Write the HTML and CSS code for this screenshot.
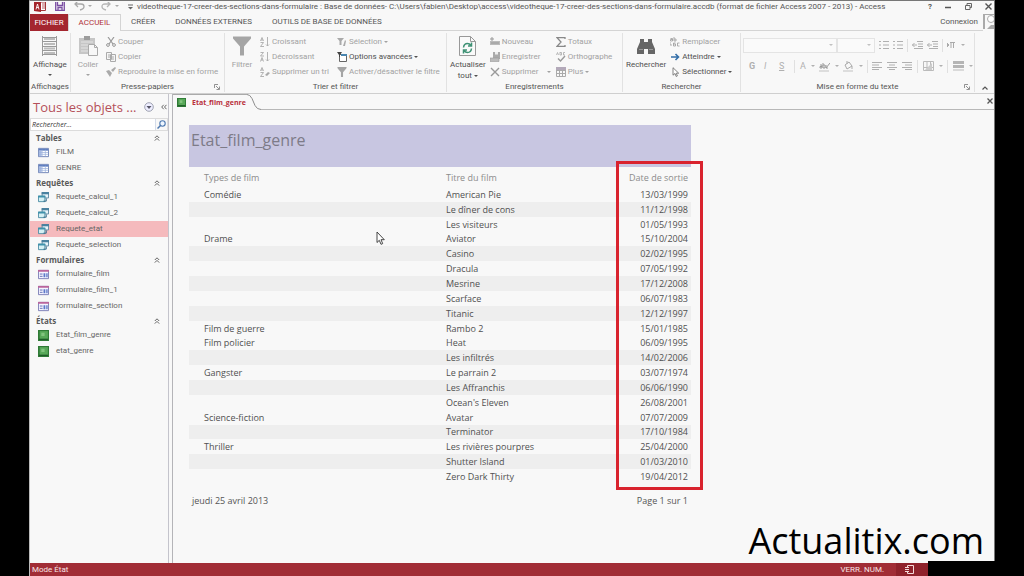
FILE: index.html
```html
<!DOCTYPE html>
<html lang="fr">
<head>
<meta charset="utf-8">
<title>Access - videotheque</title>
<link rel="stylesheet" href="styles.css">
</head>
<body>
<svg class="sprite" aria-hidden="true">
  <symbol id="caret" viewBox="0 0 4 4"><path d="M0 1h4L2 3z" fill="currentColor"/></symbol>
  <symbol id="table" viewBox="0 0 12 10"><path d="M.5.5h11v9H.5z" fill="#fff" stroke="#6a7fb4"/><path d="M1 1h10v2H1z" fill="#5f7fc0"/><path d="M1 3h3v6H1z" fill="#a9bce4"/><path d="M1 5h10M1 7h10M4.500 2v7M8 2v7" stroke="#9db2dc" stroke-width=".8"/></symbol>
  <symbol id="query" viewBox="0 0 12 12"><path d="M4.500.5h7v6h-7z" fill="#e8f4fa" stroke="#5b87a0"/><path d="M4 0h8v2.500H4z" fill="#4a819f"/><path d="M.5 4.500h7v6h-7z" fill="#d5f0f4" stroke="#4b8ca4"/><path d="M0 4h8v2H0z" fill="#3f91ab"/><path d="M6 10h3V7" fill="none" stroke="#2c6687"/></symbol>
  <symbol id="form" viewBox="0 0 12 10"><path d="M.5.5h11v9H.5z" fill="#f5f4ff" stroke="#7779b4"/><path d="M0 0h12v2H0z" fill="#b9659c"/><path d="M2 4.500h3M2 7h3" stroke="#5c68b0"/><path d="M6 3.500h2v4.500H6zM9 3.500h1.500v4.500H9z" fill="#5e79c9"/></symbol>
  <symbol id="report" viewBox="0 0 10 10"><path d="M0 0h10v10H0z" fill="#2f7a36"/><path d="M1.500 1h7.500v7H1.500z" fill="#58a859"/><path d="M3 2.500h3v3H3z" fill="#82c47e"/><path d="M1 8.500h8" stroke="#1e5a27"/></symbol>
  <symbol id="up" viewBox="0 0 6 6"><path d="M.8 3L3 .8 5.200 3M.8 5.600L3 3.400l2.200 2.200" fill="none" stroke="#555" stroke-width=".9"/></symbol>
  <symbol id="funnel" viewBox="0 0 18 19"><path d="M0 0h18v2l-7 8v9H7v-9L0 2z" fill="#a5a5a5"/></symbol>
  <symbol id="bullets" viewBox="0 0 10 10"><path d="M0 1.500h2M0 5h2M0 8.500h2M4 1.500h6M4 5h6M4 8.500h6" stroke="currentColor"/></symbol>
  <symbol id="indent" viewBox="0 0 11 8"><path d="M5 .5h6M6 3h5M6 5.500h5M2 7.500h9M0 4h5M2.500 2L.5 4l2 2" fill="none" stroke="currentColor"/></symbol>
  <symbol id="left" viewBox="0 0 10 8"><path d="M0 .5h10M0 3h7M0 5.500h10M0 7.500h7" stroke="currentColor"/></symbol>
  <symbol id="center" viewBox="0 0 10 8"><path d="M0 .5h10M2 3h6M0 5.500h10M2 7.500h6" stroke="currentColor"/></symbol>
  <symbol id="right" viewBox="0 0 10 8"><path d="M0 .5h10M3 3h7M0 5.500h10M3 7.500h7" stroke="currentColor"/></symbol>
  <symbol id="launcher" viewBox="0 0 6 6"><path d="M.5 4V.5H4M2 2l3 3M5.500 2.500v3h-3" fill="none" stroke="#777" stroke-width=".8"/></symbol>
</svg>

<div class="app">
  <header class="titlebar">
    <div class="quick">
      <svg width="12" height="10" viewBox="0 0 12 10"><path d="M6 0h5.500v8.500H6z" fill="#fff" stroke="#a4373a"/><path d="M8 2h3M8 4h3M8 6h3" stroke="#a4373a" stroke-width=".8"/><path d="M0 0l7-1v11L0 9z" fill="#a4262c"/><path d="M2 7.500L3.500 2 5 7.500M2.500 5.500h2" fill="none" stroke="#fff" stroke-width=".9"/></svg>
      <svg width="10" height="9" viewBox="0 0 10 9"><path d="M.7 0v8.300h8.600V0M2.500 0v3.500h5V0M3 8V5.500h4V8" fill="none" stroke="#7b4fa3" stroke-width="1.300"/></svg>
      <svg width="18" height="9" viewBox="0 0 18 9"><path d="M1 2h6q3 0 3 2.500T6 8M4-1L1 2l3 3" fill="none" stroke="#a9a9a9" stroke-width="1.300"/><path d="M14 3h4l-2 2z" fill="#aaa"/></svg>
      <svg width="18" height="9" viewBox="0 0 18 9"><path d="M9 2H4Q1 2 1 4.500T5 8M6-1l3 3-3 3" fill="none" stroke="#b5b5b5" stroke-width="1.300"/><path d="M14 3h4l-2 2z" fill="#aaa"/></svg>
      <svg width="5" height="6" viewBox="0 0 5 6"><path d="M0 1h5" stroke="#666"/><path d="M0 3h5L2.500 5.500z" fill="#666"/></svg>
    </div>
    <h1>videotheque-17-creer-des-sections-dans-formulaire : Base de données- C:\Users\fabien\Desktop\access\videotheque-17-creer-des-sections-dans-formulaire.accdb (format de fichier Access 2007 - 2013) - Access</h1>
    <div class="window">
      <button type="button" aria-label="Aide">?</button>
      <button type="button" aria-label="Réduire"><svg width="7" height="7" viewBox="0 0 7 7"><path d="M0 4.500h6" stroke="#555" stroke-width="1.500"/></svg></button>
      <button type="button" aria-label="Restaurer"><svg width="7" height="7" viewBox="0 0 7 7"><path d="M.5 2.500h4.500v4H.5zM2 2.500V.5h4.500v4H5" fill="none" stroke="#666"/></svg></button>
      <button type="button" aria-label="Fermer"><svg width="7" height="7" viewBox="0 0 7 7"><path d="M.5.5l6 6M6.500.5l-6 6" stroke="#555" stroke-width="1.400"/></svg></button>
    </div>
  </header>

  <nav class="tabs">
    <button class="file" type="button">FICHIER</button>
    <button class="tab active" type="button">ACCUEIL</button>
    <button class="tab" type="button">CRÉER</button>
    <button class="tab" type="button">DONNÉES EXTERNES</button>
    <button class="tab" type="button">OUTILS DE BASE DE DONNÉES</button>
    <a class="login" href="#">Connexion</a>
    <svg width="11" height="15" viewBox="0 0 11 15"><path d="M0 0h11v15H0z" fill="#aaa"/><path d="M2 1h9v10H8l-4 4H2z" fill="#f8f8f8"/><circle cx="8" cy="5" r="3.500" fill="#fff" stroke="#aaa"/></svg>
  </nav>

  <section class="ribbon">
    <div class="group">
      <div class="tools">
        <button class="big on" type="button"><svg width="17" height="20" viewBox="0 0 17 20"><path d="M1.500 0v20M15.500 0v20M1 1.500h15M1 5.500h15M1 10.500h15M1 14.500h15M1 18.500h15" stroke="#9a9a9a"/><path d="M3 2h11v2H3zM3 7h11v2H3zM3 11.500h11v2H3zM3 16h11v2H3z" fill="#bcbcbc"/></svg><span>Affichage</span><svg class="caret"><use href="#caret"/></svg></button>
      </div>
      <h2>Affichages</h2>
    </div>
    <div class="group">
      <div class="tools">
        <button class="big" type="button"><svg width="19" height="20" viewBox="0 0 19 20"><path d="M0 2h16v16H0z" fill="#c6c6c6"/><path d="M5 0h6v4H5z" fill="#9d9d9d"/><path d="M2 6h12M2 9h9M2 12h7M2 15h7" stroke="#e4e4e4"/><path d="M9.500 8.500h6l3 3v8h-9z" fill="#f7f7f7" stroke="#aaa"/><path d="M15.500 8.500v3h3" fill="none" stroke="#aaa"/></svg><span>Coller</span><svg class="caret"><use href="#caret"/></svg></button>
        <div class="list">
          <button type="button"><svg viewBox="0 0 10 10"><path d="M2 0l5 7M8 0L3 7" stroke="#999" stroke-width="1.200"/><circle cx="2" cy="8" r="1.400" fill="none" stroke="#999"/><circle cx="8" cy="8" r="1.400" fill="none" stroke="#999"/></svg>Couper</button>
          <button type="button"><svg viewBox="0 0 10 10"><path d="M.5.5h5v7h-5zM4.500 2.500h5v7h-5z" fill="#f5f5f5" stroke="#aaa"/><path d="M6 5h2M6 7h2M2 3h2M2 5h2" stroke="#aaa"/></svg>Copier</button>
          <button type="button"><svg viewBox="0 0 10 10"><path d="M0 4l3-1 3 3-2 4zM5 3l2 2 3-4-1-1z" fill="#aaa"/></svg>Reproduire la mise en forme</button>
        </div>
      </div>
      <h2>Presse-papiers<svg class="launcher"><use href="#launcher"/></svg></h2>
    </div>
    <div class="group">
      <div class="tools">
        <button class="big" type="button"><svg width="18" height="20"><use href="#funnel"/></svg><span>Filtrer</span></button>
        <div class="list sort">
          <button type="button"><svg viewBox="0 0 10 10"><path d="M.5 4L2 .5 3.500 4M1 3h2M.5 5.500h3l-3 4h3.500M7.500 0v9M6 7.500L7.500 9 9 7.500" fill="none" stroke="#aaa" stroke-width=".9"/></svg>Croissant</button>
          <button type="button"><svg viewBox="0 0 10 10"><path d="M.5.5h3l-3 3.500H4M.5 9.500L2 5.500l1.500 4M1 8h2M7.500 0v9M6 7.500L7.500 9 9 7.500" fill="none" stroke="#aaa" stroke-width=".9"/></svg>Décroissant</button>
          <button type="button"><svg viewBox="0 0 10 10"><path d="M.5 4L2 .5 3.500 4M1 3h2M.5 5.500h3l-3 4h3.500" fill="none" stroke="#aaa" stroke-width=".9"/><path d="M5 8l3-3 2 1-3 3z" fill="#aaa"/></svg>Supprimer un tri</button>
        </div>
        <div class="list">
          <button type="button"><svg viewBox="0 0 10 10"><path d="M0 1h7L4.500 4v4h-2V4zM8 3L6 9h2l1-5z" fill="#aaa"/></svg>Sélection<svg class="caret"><use href="#caret"/></svg></button>
          <button class="on" type="button"><svg viewBox="0 0 10 10"><path d="M2.500 2.500h7v7h-7z" fill="#fff" stroke="#666"/><path d="M4 2h6v2H4z" fill="#4a86b0"/><path d="M0 0h5L3 3v2H2V3z" fill="#444"/></svg>Options avancées<svg class="caret"><use href="#caret"/></svg></button>
          <button type="button"><svg viewBox="0 0 18 19"><use href="#funnel"/></svg>Activer/désactiver le filtre</button>
        </div>
      </div>
      <h2>Trier et filtrer</h2>
    </div>
    <div class="group">
      <div class="tools">
        <button class="big on" type="button"><svg width="17" height="20" viewBox="0 0 17 20"><path d="M.5.5h11l5 5v14H.5z" fill="#fafafa" stroke="#999"/><path d="M11.500.5v5h5" fill="none" stroke="#999"/><path d="M4.500 11.500q.5-4 4-4 2 0 3.500 2M12.500 6.500v3.500H9M12.500 12.500q-.5 4-4 4-2 0-3.500-2M4.500 17.500V14H8" fill="none" stroke="#3f9275" stroke-width="1.500"/></svg><span>Actualiser<br>tout<svg class="caret"><use href="#caret"/></svg></span></button>
        <div class="list records">
          <button type="button"><svg viewBox="0 0 10 10"><path d="M0 4h10v4H0z" fill="#bbb"/><path d="M1 6h8M2 0v4M0 2h4" stroke="#999"/></svg>Nouveau</button>
          <button type="button"><svg viewBox="0 0 10 10"><path d="M3 0h7v7H3z" fill="#aaa"/><path d="M5 0h3v2.500H5z" fill="#eee"/><path d="M0 6h9v3.500H0z" fill="#bbb" stroke="#999" stroke-width=".6"/></svg>Enregistrer</button>
          <button type="button"><svg viewBox="0 0 10 10"><path d="M1 1l8 8M9 1L1 9" stroke="#999" stroke-width="1.400"/></svg>Supprimer<svg class="caret far"><use href="#caret"/></svg></button>
        </div>
        <div class="list">
          <button type="button"><svg viewBox="0 0 10 10"><path d="M9 2V.7H1L5 5 1 9.300h8V8" fill="none" stroke="#888" stroke-width="1.300"/></svg>Totaux</button>
          <button type="button"><svg viewBox="0 0 10 10"><path d="M.5 3L1.500.5l1 2.500M4 0v3h1.500V.5H4M9 .5H7.500V3H9" fill="none" stroke="#aaa" stroke-width=".8"/><path d="M2 6.500L4.500 9 9 4" fill="none" stroke="#999" stroke-width="1.400"/></svg>Orthographe</button>
          <button type="button"><svg viewBox="0 0 10 10"><path d="M.5.5h9v9h-9zM0 3.500h10M0 6.500h10M3.500 0v10M6.500 3v7" fill="none" stroke="#aaa"/><path d="M0 0h10v3H0z" fill="#b3a9b9"/></svg>Plus<svg class="caret"><use href="#caret"/></svg></button>
        </div>
      </div>
      <h2>Enregistrements</h2>
    </div>
    <div class="group">
      <div class="tools">
        <button class="big on" type="button"><svg width="18" height="20" viewBox="0 0 18 20"><path d="M3 3h4v3h4V3h4v3l3 7v5h-7v-5H7v5H0v-5l3-7z" fill="#666"/><path d="M2 13.500h4M12 13.500h4" stroke="#999"/></svg><span>Rechercher</span></button>
        <div class="list">
          <button type="button"><svg viewBox="0 0 10 10"><path d="M.5 1.500h2V4h-2V2.500h2M4 0v4h2V2H4M5.500 6h-2v3h2v-2h-2M9.500 6H7.500v3h2M0 5v3h2" fill="none" stroke="#999" stroke-width=".8"/></svg>Remplacer</button>
          <button class="on" type="button"><svg viewBox="0 0 10 10"><path d="M1 5h7M5.500 2l3 3-3 3" fill="none" stroke="#346fa8" stroke-width="1.600"/></svg>Atteindre<svg class="caret"><use href="#caret"/></svg></button>
          <button class="on" type="button"><svg viewBox="0 0 10 10"><path d="M3 .7v7.500l2-1.700 1.200 3 1.200-.6-1.200-2.700h2.500z" fill="#fff" stroke="#666" stroke-width=".8"/></svg>Sélectionner<svg class="caret"><use href="#caret"/></svg></button>
        </div>
      </div>
      <h2>Rechercher</h2>
    </div>
    <div class="group format">
      <div class="formatting">
        <div class="bar">
          <select class="font" aria-label="Police" disabled><option></option></select>
          <select class="size" aria-label="Taille" disabled><option></option></select>
          <button type="button" aria-label="Puces"><svg width="10" height="10"><use href="#bullets"/></svg></button>
          <button type="button" aria-label="Numérotation"><svg width="10" height="10"><use href="#bullets"/></svg></button>
          <i class="rule"></i>
          <button type="button" aria-label="Diminuer le retrait"><svg width="11" height="8"><use href="#indent"/></svg></button>
          <button type="button" aria-label="Augmenter le retrait"><svg width="11" height="8"><use href="#indent"/></svg></button>
          <i class="rule"></i>
          <button type="button" aria-label="Sens du texte"><svg width="9" height="7" viewBox="0 0 9 7"><path d="M0 1l2 2-2 2zM3 .5h5M4 .5V6M6.500.5V6" fill="#aaa" stroke="#aaa"/></svg><svg class="caret"><use href="#caret"/></svg></button>
        </div>
        <div class="bar second">
          <button type="button"><b>G</b></button>
          <button type="button"><em>I</em></button>
          <button type="button"><u>S</u></button>
          <i class="rule"></i>
          <button type="button">A<svg class="caret"><use href="#caret"/></svg></button>
          <button type="button" aria-label="Surlignage"><svg width="11" height="11" viewBox="0 0 11 11"><path d="M1 4h2v3H1V5.500h2M4 2v5h2V4H4M7 7l4-5M7 4v3h2" fill="none" stroke="#999"/><path d="M0 9h10v2H0z" fill="#ddd"/></svg><svg class="caret"><use href="#caret"/></svg></button>
          <button type="button" aria-label="Remplissage"><svg width="11" height="11" viewBox="0 0 11 11"><path d="M2 4l4-3 3 4-5 3zM9 5v3M4 3V0" fill="none" stroke="#aaa"/><path d="M0 9h10v2H0z" fill="#ddd"/></svg><svg class="caret"><use href="#caret"/></svg></button>
          <i class="rule"></i>
          <button type="button" aria-label="Gauche"><svg width="10" height="8"><use href="#left"/></svg></button>
          <button type="button" aria-label="Centrer"><svg width="10" height="8"><use href="#center"/></svg></button>
          <button type="button" aria-label="Droite"><svg width="10" height="8"><use href="#right"/></svg></button>
          <i class="rule"></i>
          <button type="button" aria-label="Quadrillage"><svg width="11" height="10" viewBox="0 0 11 10"><path d="M.5.5h10v9H.5zM0 6.500h11M4 0v10M7.500 0v10" fill="none" stroke="#bbb"/><path d="M2 9l7-7v7z" fill="#ccc"/></svg><svg class="caret"><use href="#caret"/></svg></button>
          <i class="rule"></i>
          <button type="button" aria-label="Lignes alternées"><svg width="11" height="10" viewBox="0 0 11 10"><path d="M0 0h11v3H0zM0 4h11v3H0z" fill="#b5b5b5"/><path d="M0 9h11" stroke="#bbb"/></svg><svg class="caret"><use href="#caret"/></svg></button>
        </div>
      </div>
      <h2>Mise en forme du texte<svg class="launcher"><use href="#launcher"/></svg></h2>
    </div>
    <button class="collapse" type="button" aria-label="Réduire le ruban"><svg width="6" height="4" viewBox="0 0 6 4"><path d="M.5 3.500L3 1l2.500 2.500" fill="none" stroke="#555" stroke-width="1.200"/></svg></button>
  </section>

  <div class="workspace">
    <aside class="nav">
      <div class="navhead"><h2>Tous les objets ...</h2>
        <button type="button" aria-label="Menu"><svg width="10" height="10" viewBox="0 0 10 10"><circle cx="5" cy="5" r="4.300" fill="#eef" stroke="#8a8fa0" stroke-width=".8"/><path d="M2.500 4h5L5 7z" fill="#556"/></svg></button>
        <button type="button" aria-label="Réduire le volet"><svg width="6" height="6" viewBox="0 0 6 6"><path d="M2.700.8L.7 3l2 2.200M5.500.8l-2 2.200 2 2.200" fill="none" stroke="#555" stroke-width=".9"/></svg></button>
      </div>
      <div class="search"><input type="text" aria-label="Rechercher" placeholder="Rechercher..."><button type="button" aria-label="Lancer la recherche"><svg width="9" height="9" viewBox="0 0 9 9"><circle cx="5.500" cy="3.500" r="2.700" fill="#eef6ff" stroke="#4e79b0" stroke-width="1.100"/><path d="M3.500 5.500L.5 8.500" stroke="#4e79b0" stroke-width="1.500"/></svg></button></div>
      <h3>Tables<svg><use href="#up"/></svg></h3>
      <a href="#"><svg><use href="#table"/></svg>FILM</a>
      <a href="#"><svg><use href="#table"/></svg>GENRE</a>
      <h3>Requêtes<svg><use href="#up"/></svg></h3>
      <a href="#"><svg><use href="#query"/></svg>Requete_calcul_1</a>
      <a href="#"><svg><use href="#query"/></svg>Requete_calcul_2</a>
      <a class="selected" href="#"><svg><use href="#query"/></svg>Requete_etat</a>
      <a href="#"><svg><use href="#query"/></svg>Requete_selection</a>
      <h3>Formulaires<svg><use href="#up"/></svg></h3>
      <a href="#"><svg><use href="#form"/></svg>formulaire_film</a>
      <a href="#"><svg><use href="#form"/></svg>formulaire_film_1</a>
      <a href="#"><svg><use href="#form"/></svg>formulaire_section</a>
      <h3>États<svg><use href="#up"/></svg></h3>
      <a href="#"><svg><use href="#report"/></svg>Etat_film_genre</a>
      <a href="#"><svg><use href="#report"/></svg>etat_genre</a>
    </aside>

    <main class="document">
      <div class="doctabs">
        <button class="doctab" type="button"><svg width="9" height="9"><use href="#report"/></svg>Etat_film_genre</button>
        <svg class="slope" width="14" height="16" viewBox="0 0 14 16"><path d="M0 .5q3 0 5 4l3 7q2 4 6 4" fill="none" stroke="#8c8c8c"/></svg>
        <div class="docline"></div>
        <button class="docclose" type="button" aria-label="Fermer"><svg width="6" height="6" viewBox="0 0 6 6"><path d="M.5.5l5 5M5.500.5l-5 5" stroke="#555" stroke-width="1.300"/></svg></button>
      </div>
      <article class="report">
        <h2>Etat_film_genre</h2>
        <div class="data">
          <table>
            <thead><tr><th>Types de film</th><th>Titre du film</th><th>Date de sortie</th></tr></thead>
            <tbody>
              <tr><td>Comédie</td><td>American Pie</td><td>13/03/1999</td></tr>
              <tr class="alt"><td></td><td>Le dîner de cons</td><td>11/12/1998</td></tr>
              <tr><td></td><td>Les visiteurs</td><td>01/05/1993</td></tr>
              <tr><td>Drame</td><td>Aviator</td><td>15/10/2004</td></tr>
              <tr class="alt"><td></td><td>Casino</td><td>02/02/1995</td></tr>
              <tr><td></td><td>Dracula</td><td>07/05/1992</td></tr>
              <tr class="alt"><td></td><td>Mesrine</td><td>17/12/2008</td></tr>
              <tr><td></td><td>Scarface</td><td>06/07/1983</td></tr>
              <tr class="alt"><td></td><td>Titanic</td><td>12/12/1997</td></tr>
              <tr><td>Film de guerre</td><td>Rambo 2</td><td>15/01/1985</td></tr>
              <tr><td>Film policier</td><td>Heat</td><td>06/09/1995</td></tr>
              <tr class="alt"><td></td><td>Les infiltrés</td><td>14/02/2006</td></tr>
              <tr><td>Gangster</td><td>Le parrain 2</td><td>03/07/1974</td></tr>
              <tr class="alt"><td></td><td>Les Affranchis</td><td>06/06/1990</td></tr>
              <tr><td></td><td>Ocean's Eleven</td><td>26/08/2001</td></tr>
              <tr><td>Science-fiction</td><td>Avatar</td><td>07/07/2009</td></tr>
              <tr class="alt"><td></td><td>Terminator</td><td>17/10/1984</td></tr>
              <tr><td>Thriller</td><td>Les rivières pourpres</td><td>25/04/2000</td></tr>
              <tr class="alt"><td></td><td>Shutter Island</td><td>01/03/2010</td></tr>
              <tr><td></td><td>Zero Dark Thirty</td><td>19/04/2012</td></tr>
            </tbody>
          </table>
          <div class="highlight"></div>
        </div>
        <footer><span>jeudi 25 avril 2013</span><span>Page 1 sur 1</span></footer>
        <svg class="cursor" width="9" height="14" viewBox="0 0 9 14"><path d="M1 1v10.500l2.300-2.200 1.700 4 1.700-.7L5 8.700h3.300z" fill="#fff" stroke="#333" stroke-width=".9"/></svg>
      </article>
      <div class="watermark">Actualitix.com</div>
    </main>
  </div>

  <footer class="status"><span>Mode État</span><span class="num">VERR. NUM.</span><span class="view"><svg width="9" height="9" viewBox="0 0 9 9"><path d="M2.500.5h6v8h-6M2.500.5v2M2.500 6.500v2M0 2.500h4M0 4.500h4M0 6.500h4" fill="none" stroke="#f5dada"/></svg></span></footer>
</div>
<div class="mask"></div>
</body>
</html>
```
FILE: styles.css
```css
* { box-sizing: border-box; }
html, body { height: 100%; }
body {
  margin: 0;
  padding: 0 29px;
  background: #000;
  color: #555;
  font: 8px/12px Roboto, "Open Sans", sans-serif;
  position: relative;
  overflow: hidden;
}
h1, h2, h3 { margin: 0; font: inherit; }
button { margin: 0; padding: 0; border: 0; background: none; color: inherit; font: inherit; white-space: nowrap; }
a { color: inherit; text-decoration: none; }
svg { display: block; flex: none; }
.sprite { position: absolute; width: 0; height: 0; }
.caret { width: 4px; height: 4px; }

.app { display: flex; flex-direction: column; height: 100%; background: #f8f8f8; border-left: 1px solid #bbb; border-right: 1px solid #777; border-top: 1px solid #777; }

.titlebar { display: flex; align-items: center; height: 13px; padding: 0 2px 2px 4px; }
.quick { display: flex; align-items: center; gap: 9px; width: 103px; }
.titlebar h1 { flex: 1; white-space: nowrap; }
.window { display: flex; align-items: center; gap: 13px; font-weight: 700; }

.tabs { display: flex; align-items: stretch; height: 17px; }
.file { width: 38px; background: #a4262f; color: #fff; }
.tab { padding: 0 10px; border-bottom: 1px solid #d4d4d4; }
.tab.active { width: 53px; padding: 0; color: #b03038; border: 1px solid #d4d4d4; border-bottom: 0; }
.login { flex: 1; display: flex; align-items: center; justify-content: flex-end; padding-right: 5px; border-bottom: 1px solid #d4d4d4; }

.ribbon { display: grid; grid-template-columns: 41px 154px 222px 176px 118px 1fr 19px; height: 63px; border-bottom: 1px solid #cfcfcf; }
.group { display: flex; flex-direction: column; justify-content: space-between; min-width: 0; margin: 2px 0; border-right: 1px solid #e2e2e2; }
.group h2 { position: relative; text-align: center; line-height: 11px; }
.launcher { position: absolute; right: 4px; bottom: 2px; width: 6px; height: 6px; }
.tools { display: flex; padding: 1px 0 0 3px; gap: 4px; color: #a2a2a2; }
.tools .on { color: #505050; }
.big { display: flex; flex-direction: column; align-items: center; gap: 3px; min-width: 28px; line-height: 11px; padding-top: 2px; }
.big span .caret { display: inline-block; margin-left: 2px; }
.list { display: flex; flex-direction: column; }
.list button { display: flex; align-items: center; gap: 2px; height: 15px; }
.list button > svg:first-child { width: 10px; height: 10px; }
.sort { width: 73px; }
.records { width: 62px; }
.far { margin-left: 6px; }
.collapse { align-self: end; justify-self: center; padding-bottom: 4px; }

.formatting { padding: 4px 2px 0; color: #b0b0b0; }
.bar { display: flex; align-items: center; height: 16px; gap: 4px; }
.bar.second { margin-top: 5px; padding-left: 6px; font-size: 9px; gap: 5px; }
.bar button { display: flex; align-items: center; gap: 5px; min-width: 10px; }
.bar select { appearance: none; height: 15px; border: 1px solid #dcdcdc; border-radius: 0; background: url("data:image/svg+xml,%3Csvg xmlns='http://www.w3.org/2000/svg' width='4' height='4'%3E%3Cpath d='M0 1h4L2 3z' fill='%23aaa'/%3E%3C/svg%3E") no-repeat right 3px center #fbfbfb; padding: 0; }
.font { width: 94px; }
.size { width: 38px; margin-left: -4px; }
.rule { width: 1px; height: 13px; background: #e0e0e0; }

.workspace { display: flex; flex: 1; min-height: 0; }
.nav { width: 139px; border-right: 1px solid #c4c4cc; padding-top: 2px; color: #666; }
.navhead { display: flex; align-items: center; height: 22px; gap: 7px; padding: 0 4px 0 3px; }
.navhead h2 { flex: 1; font: 13px/20px "Open Sans", sans-serif; color: #b5505a; white-space: nowrap; }
.search { display: flex; height: 13px; border: 1px solid #dcdcdc; }
.search input { flex: 1; min-width: 0; border: 0; padding: 0 1px; background: #fff; font: italic 7px/10px "Open Sans", sans-serif; }
.search input::placeholder { color: #333; }
.search button { width: 12px; border-left: 1px solid #d4dcea; padding-left: 1px; }
.nav h3 { display: flex; justify-content: space-between; align-items: center; height: 13px; padding: 0 8px 0 6px; font: 700 8px/12px "Open Sans", sans-serif; color: #5a5a5a; }
.nav h3 svg { width: 6px; height: 6px; }
.nav a { display: flex; align-items: center; gap: 7px; height: 16px; padding-left: 8px; }
.nav a svg { width: 11px; height: 11px; }
.nav a.selected { background: #f5babd; }

.document { position: relative; flex: 1; min-width: 0; margin-left: 3px; border-left: 1px solid #b4b4b8; font-family: "Open Sans", sans-serif; }
.doctabs { display: flex; height: 16px; }
.doctab { display: flex; align-items: center; gap: 6px; width: 74px; padding-left: 4px; border-top: 1px solid #aaa; color: #b8303c; font-size: 7px; font-weight: 700; }
.docline { flex: 1; border-bottom: 1px solid #b8b8b8; }
.docclose { padding: 0 1px 2px 3px; border-bottom: 1px solid #b8b8b8; }
.report { position: relative; max-width: 518px; padding: 15px 0 0 16px; font-size: 9px; }
.report h2 { height: 42px; padding: 4px 2px; background: #c8c6e1; color: #7d7b88; font-size: 16px; line-height: 22px; }
.data { position: relative; }
table { width: 100%; height: 317px; border-collapse: collapse; table-layout: fixed; line-height: 13px; color: #505050; }
th { height: 20px; padding: 0; text-align: left; font-weight: 400; color: #8c8c8c; }
td { padding: 0; }
th:first-child, td:first-child { width: 257px; padding-left: 15px; }
th:last-child, td:last-child { text-align: right; padding-right: 3px; }
.alt { background: #eee; }
.highlight { position: absolute; right: -12px; top: -6px; bottom: -6px; width: 87px; border: 3px solid #d9232e; }
.report footer { display: flex; justify-content: space-between; padding: 11px 3px 0; }
.cursor { position: absolute; left: 203px; top: 121px; }
.watermark { position: absolute; right: 10px; bottom: 0; color: #000; font-size: 36px; line-height: 44px; }

.status { display: flex; align-items: center; height: 13px; padding-left: 2px; background: #a12d36; color: #f7e6e6; }
.num { margin-left: auto; margin-right: 12px; }
.view { display: flex; justify-content: center; align-self: stretch; align-items: center; width: 32px; margin-right: 66px; background: #8f222b; padding-right: 6px; }
.mask { position: absolute; right: 0; bottom: 0; width: 96px; height: 15px; background: #000; }
```
